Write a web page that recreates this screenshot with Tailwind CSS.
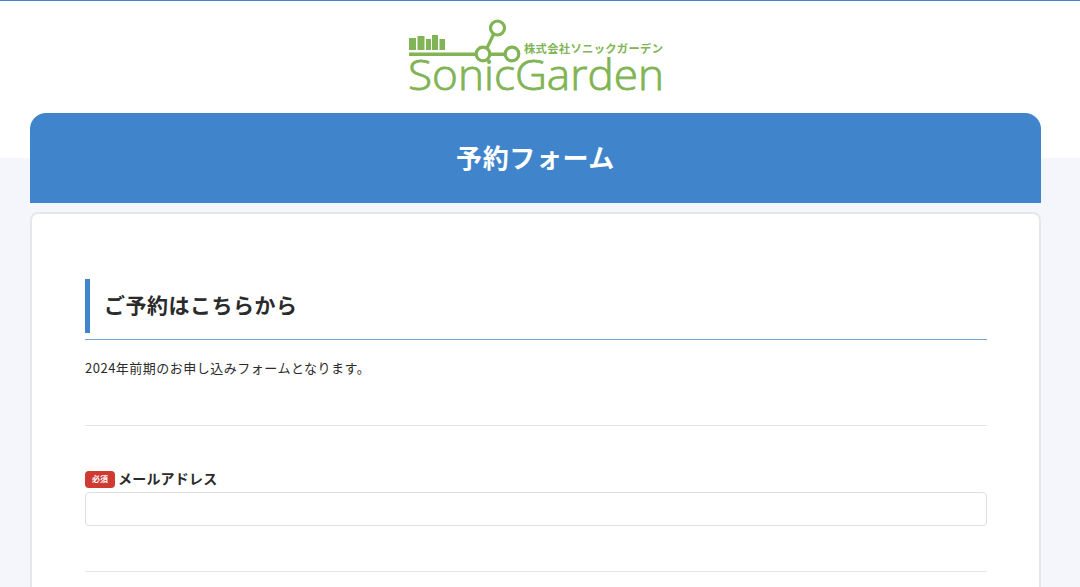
<!DOCTYPE html>
<html lang="ja">
<head>
<meta charset="utf-8">
<title>予約フォーム</title>
<script src="https://cdn.jsdelivr.net/npm/@tailwindcss/browser@4"></script>
</head>
<body class="h-[587px] overflow-hidden bg-[#f5f6fb] font-['Noto_Sans_CJK_JP','Noto_Sans',sans-serif] text-[#2b2b2b]">
  <header class="h-[158px] border-t border-[#4085cb] bg-white">
    <div class="flex justify-center pt-[14px]">
      <svg class="ml-[-10px] block" width="270" height="85" viewBox="400 15 270 85" fill="none" role="img" aria-label="SonicGarden">
        <g fill="#80b454">
          <rect x="409" y="38" width="7" height="12"/>
          <rect x="417.500" y="36" width="7" height="14"/>
          <rect x="426" y="39" width="5" height="11"/>
          <rect x="432" y="35" width="6" height="15"/>
          <rect x="439.500" y="39" width="5.500" height="11"/>
          <rect x="409" y="52.500" width="67" height="3.500"/>
          <rect x="490" y="52.500" width="15" height="3.500"/>
        </g>
        <g stroke="#80b454" stroke-width="3.200">
          <circle cx="483" cy="54" r="6.800"/>
          <circle cx="512" cy="54" r="6.800"/>
          <circle cx="497.500" cy="28" r="7"/>
          <path d="M487 48 L493.500 34.500"/>
        </g>
        <text x="524" y="52.500" fill="#80b454" font-size="11.300" font-weight="700" font-family="'Noto Sans CJK JP',sans-serif" textLength="139">株式会社ソニックガーデン</text>
        <text x="408" y="90" fill="#80b454" stroke="#80b454" stroke-width="0.800" font-size="42" font-weight="300" font-family="'Open Sans','Liberation Sans',sans-serif" textLength="256" lengthAdjust="spacingAndGlyphs">SonicGarden</text>
      </svg>
    </div>
  </header>
  <main class="mx-[30px] mt-[-45px] w-[1011px]">
    <div class="flex h-[90px] items-center justify-center rounded-t-2xl bg-[#4085cb] pb-[4px]">
      <h1 class="text-[26px] font-bold tracking-[0.6px] text-white">予約フォーム</h1>
    </div>
    <section class="mt-[9px] h-[500px] rounded-[8px] border-2 border-[#e6e7ea] bg-white pl-[53px] pr-[52px] pt-[65px]">
      <div class="border-b border-[#7aa5d6] pb-[6px]">
        <h2 class="flex h-[54px] items-center border-l-[5px] border-[#4085cb] pb-[2px] pl-[14px] text-[21px] font-bold tracking-[0.5px]">ご予約はこちらから</h2>
      </div>
      <p class="mt-[18px] text-[13px] leading-[20px] tracking-[0.5px]">2024年前期のお申し込みフォームとなります。</p>
      <hr class="mt-[47px] border-[#e4e5e8]">
      <div class="mt-[44px]">
        <label class="flex h-[18px] items-center gap-[3px] text-[14px] font-bold tracking-[0.2px]">
          <span class="flex h-[17px] w-[30px] items-center justify-center rounded-[4px] bg-[#cf3a32] text-[8px] font-bold tracking-normal text-white">必須</span>
          <span class="mb-[2px]">メールアドレス</span>
        </label>
        <input type="text" class="mt-[4px] block h-[34px] w-full rounded-[4px] border border-[#dedfe2] bg-white">
      </div>
      <hr class="mt-[45px] border-[#e4e5e8]">
    </section>
  </main>
</body>
</html>
